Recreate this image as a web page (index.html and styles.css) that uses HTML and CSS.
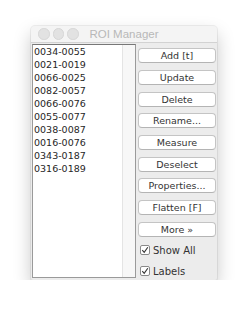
FILE: index.html
```html
<!DOCTYPE html>
<html lang="en">
<head>
  <meta charset="UTF-8">
  <title>ROI Manager</title>
  <link rel="stylesheet" href="styles.css">
</head>
<body>
  <div class="window">
    <div class="titlebar">
      <div class="lights">
        <span></span><span></span><span></span>
      </div>
      <div class="title">ROI Manager</div>
    </div>

    <div class="content">
      <div class="list">
        <ul class="items">
          <li>0034-0055</li>
          <li>0021-0019</li>
          <li>0066-0025</li>
          <li>0082-0057</li>
          <li>0066-0076</li>
          <li>0055-0077</li>
          <li>0038-0087</li>
          <li>0016-0076</li>
          <li>0343-0187</li>
          <li>0316-0189</li>
        </ul>
        <div class="scrollbar"></div>
      </div>

      <div class="side">
        <button class="btn">Add [t]</button>
        <button class="btn">Update</button>
        <button class="btn">Delete</button>
        <button class="btn">Rename...</button>
        <button class="btn">Measure</button>
        <button class="btn">Deselect</button>
        <button class="btn">Properties...</button>
        <button class="btn">Flatten [F]</button>
        <button class="btn">More &raquo;</button>
        <label class="check">
          <svg width="10" height="10" viewBox="0 0 10 10"><rect x="0.5" y="0.5" width="9" height="9" rx="1.5" fill="#fff" stroke="#8a8a8a"/><path d="M2.3 5.2 L4.2 7.4 L7.8 2.2" fill="none" stroke="#333" stroke-width="1.1"/></svg>
          Show All
        </label>
        <label class="check">
          <svg width="10" height="10" viewBox="0 0 10 10"><rect x="0.5" y="0.5" width="9" height="9" rx="1.5" fill="#fff" stroke="#8a8a8a"/><path d="M2.3 5.2 L4.2 7.4 L7.8 2.2" fill="none" stroke="#333" stroke-width="1.1"/></svg>
          Labels
        </label>
      </div>
    </div>
  </div>
</body>
</html>
```

FILE: styles.css
```css
* {
  margin: 0;
  padding: 0;
  box-sizing: border-box;
}
body {
  background-color: #fff;
  font-family: 'DejaVu Sans', sans-serif;
  color: #333;
}
.window {
  margin: 26px 0 0 31px;
  width: 186px;
  height: 254px;
  background-color: #ececec;
  border-radius: 4px 4px 2px 2px;
  box-shadow: 0 0 0 1px rgba(0,0,0,0.06), 0 8px 18px rgba(0,0,0,0.22);
  display: flex;
  flex-direction: column;
}
.titlebar {
  height: 18px;
  display: flex;
  align-items: center;
  position: relative;
  background-color: #f4f4f4;
  border-bottom: 1px solid #d2d2d2;
  border-radius: 4px 4px 0 0;
}
.lights {
  display: flex;
  gap: 3px;
  padding-left: 7px;
}
.lights span {
  width: 11.5px;
  height: 11.5px;
  border-radius: 50%;
  background-color: #e2e2e2;
  border: 1px solid #d6d6d6;
}
.title {
  position: absolute;
  left: 0;
  right: 0;
  text-align: center;
  font-family: 'Liberation Sans', sans-serif;
  font-size: 11.5px;
  color: #b8b8b8;
}
.content {
  flex: 1;
  display: flex;
  padding: 1px 1px 2px 1px;
  gap: 2px;
}
.list {
  width: 104px;
  display: flex;
  background-color: #fff;
  border: 1px solid #9a9a9a;
  border-top-color: #777;
}
.items {
  flex: 1;
  list-style: none;
  padding-left: 1px;
  font-size: 9.5px;
  line-height: 13px;
  color: #262626;
}
.scrollbar {
  width: 13px;
  background-color: #f7f7f7;
  border-left: 1px solid #e4e4e4;
}
.side {
  flex: 1;
  display: flex;
  flex-direction: column;
  gap: 6.7px;
  padding-top: 4px;
}
.btn {
  height: 15px;
  background-color: #fff;
  border: 1px solid #c4c4c4;
  border-bottom-color: #b4b4b4;
  border-radius: 4px;
  font-family: 'DejaVu Sans', sans-serif;
  font-size: 9.5px;
  color: #333;
  line-height: 13px;
}
.check {
  display: flex;
  align-items: center;
  gap: 3px;
  height: 14px;
  padding-left: 2px;
  font-size: 10px;
  color: #333;
}
```
